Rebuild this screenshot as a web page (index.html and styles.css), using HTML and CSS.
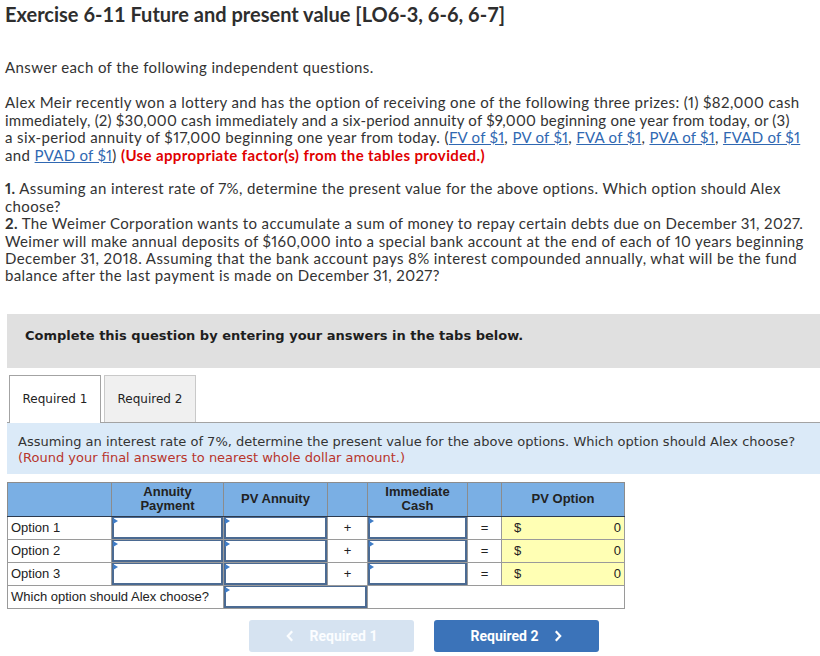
FILE: index.html
```html
<!DOCTYPE html>
<html>
<head>
<meta charset="utf-8">
<title>Exercise 6-11</title>
<link rel="stylesheet" href="styles.css">
</head>
<body>
<div class="page">
  <h1 class="title">Exercise 6-11 Future and present value [LO6-3, 6-6, 6-7]</h1>
  <p class="text intro">Answer each of the following independent questions.</p>
  <p class="text p2">Alex Meir recently won a lottery and has the option of receiving one of the following three prizes: (1) $82,000 cash<br><span class="tight">immediately, (2) $30,000 cash immediately and a six-period annuity of $9,000 beginning one year from today, or (3)</span><br>a six-period annuity of $17,000 beginning one year from today. (<a href="#">FV of $1</a>, <a href="#">PV of $1</a>, <a href="#">FVA of $1</a>, <a href="#">PVA of $1</a>, <a href="#">FVAD of $1</a><br>and <a href="#">PVAD of $1</a>) <strong class="warn">(Use appropriate factor(s) from the tables provided.)</strong></p>
  <p class="text p3"><b>1.</b> Assuming an interest rate of 7%, determine the present value for the above options. Which option should Alex<br>choose?<br><b>2.</b> The Weimer Corporation wants to accumulate a sum of money to repay certain debts due on December 31, 2027.<br>Weimer will make annual deposits of $160,000 into a special bank account at the end of each of 10 years beginning<br>December 31, 2018. Assuming that the bank account pays 8% interest compounded annually, what will be the fund<br>balance after the last payment is made on December 31, 2027?</p>

  <div class="banner">Complete this question by entering your answers in the tabs below.</div>

  <div class="tabs">
    <div class="tab active">Required 1</div>
    <div class="tab">Required 2</div>
  </div>

  <div class="instr">Assuming an interest rate of 7%, determine the present value for the above options. Which option should Alex choose?<br><span class="round">(Round your final answers to nearest whole dollar amount.)</span></div>

  <table class="grid">
    <colgroup>
      <col class="c1"><col class="c2"><col class="c3"><col class="c4"><col class="c5"><col class="c6"><col class="c7">
    </colgroup>
    <thead>
      <tr>
        <th></th>
        <th>Annuity<br>Payment</th>
        <th>PV Annuity</th>
        <th></th>
        <th>Immediate<br>Cash</th>
        <th></th>
        <th>PV Option</th>
      </tr>
    </thead>
    <tbody>
      <tr>
        <td class="lbl">Option 1</td>
        <td class="in"><div class="inp"></div></td>
        <td class="in"><div class="inp"></div></td>
        <td class="op">+</td>
        <td class="in"><div class="inp"></div></td>
        <td class="op">=</td>
        <td class="res"><span>$</span><span>0</span></td>
      </tr>
      <tr>
        <td class="lbl">Option 2</td>
        <td class="in"><div class="inp"></div></td>
        <td class="in"><div class="inp"></div></td>
        <td class="op">+</td>
        <td class="in"><div class="inp"></div></td>
        <td class="op">=</td>
        <td class="res"><span>$</span><span>0</span></td>
      </tr>
      <tr>
        <td class="lbl">Option 3</td>
        <td class="in"><div class="inp"></div></td>
        <td class="in"><div class="inp"></div></td>
        <td class="op">+</td>
        <td class="in"><div class="inp"></div></td>
        <td class="op">=</td>
        <td class="res"><span>$</span><span>0</span></td>
      </tr>
      <tr>
        <td class="lbl" colspan="2">Which option should Alex choose?</td>
        <td class="in" colspan="2"><div class="inp"></div></td>
        <td class="blank" colspan="3"></td>
      </tr>
    </tbody>
  </table>

  <div class="nav">
    <button class="btn prev" disabled>
      <svg width="8" height="12" viewBox="0 0 8 12"><path d="M6.2 1.2 L1.8 6 L6.2 10.8" fill="none" stroke="currentColor" stroke-width="2.2"/></svg>
      <span>Required 1</span>
    </button>
    <button class="btn next">
      <span>Required 2</span>
      <svg width="8" height="12" viewBox="0 0 8 12"><path d="M1.8 1.2 L6.2 6 L1.8 10.8" fill="none" stroke="currentColor" stroke-width="2.2"/></svg>
    </button>
  </div>
</div>
</body>
</html>
```
FILE: styles.css
```css
* { box-sizing: border-box; }

body {
  margin: 0;
  background: #fff;
  color: #333;
  font-family: Lato, "Liberation Sans", sans-serif;
}

.page {
  width: 820px;
  padding-top: 2px;
}

.title {
  margin: 0 0 0 5px;
  font-size: 20px;
  line-height: 24px;
  font-weight: 700;
  color: #2e2e2e;
}

.text {
  margin: 0 0 0 5px;
  font-size: 15px;
  line-height: 17.4px;
  letter-spacing: 0.38px;
  font-variant-numeric: proportional-nums;
  white-space: nowrap;
  color: #333;
}

.intro { margin-top: 33px; }
.p2 { margin-top: 18px; }
.p3 { margin-top: 16.4px; }

.text .tight { letter-spacing: 0.22px; }

.text a {
  color: #3068b2;
  text-decoration: underline;
  letter-spacing: 0.25px;
}

.warn {
  color: #e00000;
  font-weight: 700;
}

.banner {
  margin: 29px 0 0 7px;
  background: #e0e0e0;
  padding: 15px 18px 25px;
  font: bold 13px/14px "DejaVu Sans", Verdana, sans-serif;
  color: #1e1e1e;
}

.tabs {
  display: flex;
  margin: 7px 0 0 7px;
  padding-left: 2px;
  border-bottom: 1px solid #a3a3a3;
}

.tab {
  width: 92px;
  height: 47px;
  margin-right: 3px;
  display: flex;
  align-items: center;
  justify-content: center;
  background: #f0f0f0;
  border: 1px solid #c9c9c9;
  border-bottom: none;
  font: 12px "DejaVu Sans", Verdana, sans-serif;
  color: #222;
}

.tab.active {
  background: #fff;
  border-color: #a3a3a3;
  height: 48px;
  margin-bottom: -1px;
}

.instr {
  margin-left: 7px;
  height: 51px;
  background: #dbeaf8;
  padding: 11px 11px 0;
  font: 13px/16px "DejaVu Sans", Verdana, sans-serif;
  color: #333;
}

.instr .round { color: #b8352c; }

.grid {
  margin: 8px 0 0 7px;
  width: 617px;
  table-layout: fixed;
  border-collapse: collapse;
  font: 13px "Liberation Sans", Arial, sans-serif;
  color: #222;
}

.c1 { width: 104px; }
.c2 { width: 112px; }
.c3 { width: 104px; }
.c4 { width: 40px; }
.c5 { width: 100px; }
.c6 { width: 34px; }
.c7 { width: 123px; }

.grid th {
  height: 34px;
  padding: 0;
  background: #7aafe4;
  border: 1px solid #8c8c8c;
  border-bottom: 1px solid #2c3a4e;
  font-weight: 700;
  line-height: 14px;
  text-align: center;
  color: #222;
}

.grid td {
  height: 23px;
  padding: 0;
  border: 1px solid #9a9a9a;
  background: #fff;
}

.grid td.lbl { padding-left: 3px; }

.grid td.op { text-align: center; }

.grid td.res {
  background: #ffffb4;
}

.grid td.res span:first-child { float: left; margin-left: 12px; }
.grid td.res span:last-child { float: right; margin-right: 3px; }

.inp {
  position: relative;
  height: 22px;
  border: 2px solid #4b6a92;
  border-top-width: 1px;
  background: #fff;
}

.inp::before {
  content: "";
  position: absolute;
  left: -1px;
  top: 0;
  border-left: 5px solid #3f7cc6;
  border-top: 3px solid transparent;
  border-bottom: 3px solid transparent;
}

.nav {
  display: flex;
  gap: 20px;
  margin: 11px 0 0 249px;
}

.btn {
  width: 165px;
  height: 32px;
  border: 0;
  border-radius: 3px;
  display: flex;
  align-items: center;
  justify-content: center;
  gap: 16px;
  font: bold 14px Roboto, sans-serif;
  color: #fff;
  padding: 0;
}

.btn.prev { background: #d6e3f1; color: #fbfdff; }
.btn.next { background: #3b73b9; }
```
